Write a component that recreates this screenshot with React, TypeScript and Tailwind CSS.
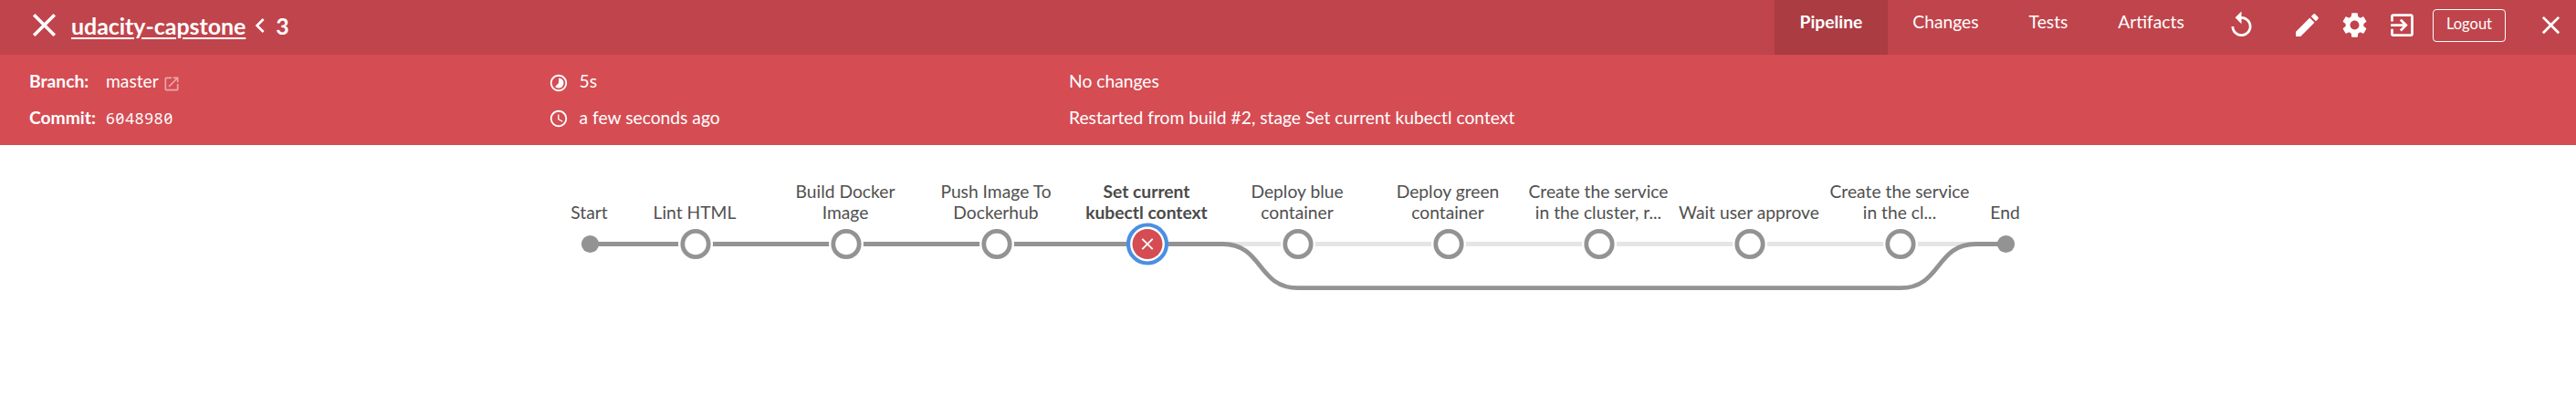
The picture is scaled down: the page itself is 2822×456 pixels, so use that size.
import React from "react";
import {
  MdAccessTime,
  MdChevronLeft,
  MdClose,
  MdExitToApp,
  MdLaunch,
  MdModeEdit,
  MdReplay,
  MdSettings,
  MdTimelapse,
} from "react-icons/md";

type Stage = { x: number; lines: string[]; selected?: boolean };

const stages: Stage[] = [
  { x: 762, lines: ["Lint HTML"] },
  { x: 927, lines: ["Build Docker", "Image"] },
  { x: 1092, lines: ["Push Image To", "Dockerhub"] },
  { x: 1257, lines: ["Set current", "kubectl context"], selected: true },
  { x: 1422, lines: ["Deploy blue", "container"] },
  { x: 1587, lines: ["Deploy green", "container"] },
  { x: 1752, lines: ["Create the service", "in the cluster, r..."] },
  { x: 1917, lines: ["Wait user approve"] },
  { x: 2082, lines: ["Create the service", "in the cl..."] },
];

const terminals = [
  { x: 646.5, label: "Start" },
  { x: 2197.5, label: "End" },
];

function Label({ x, lines, bold }: { x: number; lines: string[]; bold?: boolean }) {
  return (
    <div
      className="absolute bottom-[212px] -translate-x-1/2 text-center whitespace-nowrap"
      style={{ left: x - 1 }}
    >
      {lines.map((line) => (
        <div
          key={line}
          className={
            bold
              ? "text-[19.25px] leading-[23px] font-bold text-[#4a4a4a]"
              : "text-[19.25px] leading-[23px] text-[#505050]"
          }
        >
          {line}
        </div>
      ))}
    </div>
  );
}

function PipelineGraph() {
  return (
    <main className="relative h-[297px] w-full bg-white">
      <svg className="block h-full w-full" viewBox="0 159 2822 297" fill="none">
        <path d="M1340 267.5H2165" stroke="#e5e5e5" strokeWidth="4.8" />
        <path
          d="M646 267.5H1339.5C1384 267.5 1377 315.7 1422 315.7H2082C2127 315.7 2120 267.5 2164.5 267.5H2197"
          stroke="#949393"
          strokeWidth="4.8"
        />
        {terminals.map((t) => (
          <circle key={t.label} cx={t.x} cy="267.5" r="9.6" fill="#949393" />
        ))}
        {stages.map((s) =>
          s.selected ? (
            <g key={s.x}>
              <circle cx={s.x} cy="267.5" r="21" fill="#fff" stroke="#4a90e2" strokeWidth="4.2" />
              <circle cx={s.x} cy="267.5" r="16.5" fill="#d54c53" />
              <path
                d={`M${s.x - 5.7} 261.8l11.4 11.4m0 -11.4l-11.4 11.4`}
                stroke="#fff"
                strokeWidth="1.9"
              />
            </g>
          ) : (
            <g key={s.x}>
              <circle cx={s.x} cy="267.5" r="19" fill="#fff" />
              <circle cx={s.x} cy="267.5" r="14.2" stroke="#949393" strokeWidth="4.8" />
            </g>
          ),
        )}
      </svg>
      {terminals.map((t) => (
        <Label key={t.label} x={t.x} lines={[t.label]} />
      ))}
      {stages.map((s) => (
        <Label key={s.x} x={s.x} lines={s.lines} bold={s.selected} />
      ))}
    </main>
  );
}

function Header() {
  return (
    <header className="flex h-[60px] items-start bg-[#c0444b] text-white">
      <div className="flex h-[55px] items-center pl-[27px]">
        <MdClose className="size-[43px]" />
        <h1 className="ml-2 flex items-center text-[24.9px] leading-[30px] font-bold">
          <a className="underline decoration-2 underline-offset-[3px]">udacity-capstone</a>
          <MdChevronLeft className="size-8" />
          <span className="ml-[1px]">3</span>
        </h1>
      </div>
      <nav className="ml-auto flex h-full text-[19.25px] leading-[47px]">
        <a className="h-full w-[124px] bg-[#aa3c42] text-center font-bold">Pipeline</a>
        <a className="w-[127px] text-center">Changes</a>
        <a className="w-[98px] text-center">Tests</a>
        <a className="w-[127px] text-center">Artifacts</a>
      </nav>
      <div className="flex h-[55px] w-[402px] items-center pl-[19px]">
        <MdReplay className="size-[33px]" />
        <MdModeEdit className="ml-[39px] size-[33px]" />
        <MdSettings className="ml-[19px] size-[33px]" />
        <MdExitToApp className="ml-[19px] size-[33px]" />
        <button className="ml-[17px] h-[36px] w-[80px] rounded-[4px] border border-white pb-[2px] text-[16.5px]">
          Logout
        </button>
        <MdClose className="ml-[33px] size-[33px]" />
      </div>
    </header>
  );
}

function Details() {
  return (
    <section className="flex h-[99px] bg-[#d54c53] pt-[9px] pl-8 text-[19.25px] leading-10 text-white">
      <div className="w-[569px]">
        <div className="flex h-10">
          <span className="w-[84px] font-bold">Branch:</span>
          <span>master</span>
          <MdLaunch className="mt-[12.5px] ml-[4px] size-5 opacity-50" />
        </div>
        <div className="flex h-10">
          <span className="w-[84px] font-bold">Commit:</span>
          <span className="font-['Noto_Sans',sans-serif] text-[17px] leading-[42px] tracking-[0.85px] [font-feature-settings:'zero']">
            6048980
          </span>
        </div>
      </div>
      <div className="w-[570px]">
        <div className="flex h-10">
          <MdTimelapse className="mt-[11px] mr-[11.5px] size-[22px]" />
          <span>5s</span>
        </div>
        <div className="flex h-10">
          <MdAccessTime className="mt-[10px] mr-[11.5px] size-[22px]" />
          <span>a few seconds ago</span>
        </div>
      </div>
      <div>
        <p>No changes</p>
        <p>Restarted from build #2, stage Set current kubectl context</p>
      </div>
    </section>
  );
}

export default function App() {
  return (
    <div className="h-[456px] w-full overflow-hidden bg-white font-['Lato',sans-serif]">
      <Header />
      <Details />
      <PipelineGraph />
    </div>
  );
}
